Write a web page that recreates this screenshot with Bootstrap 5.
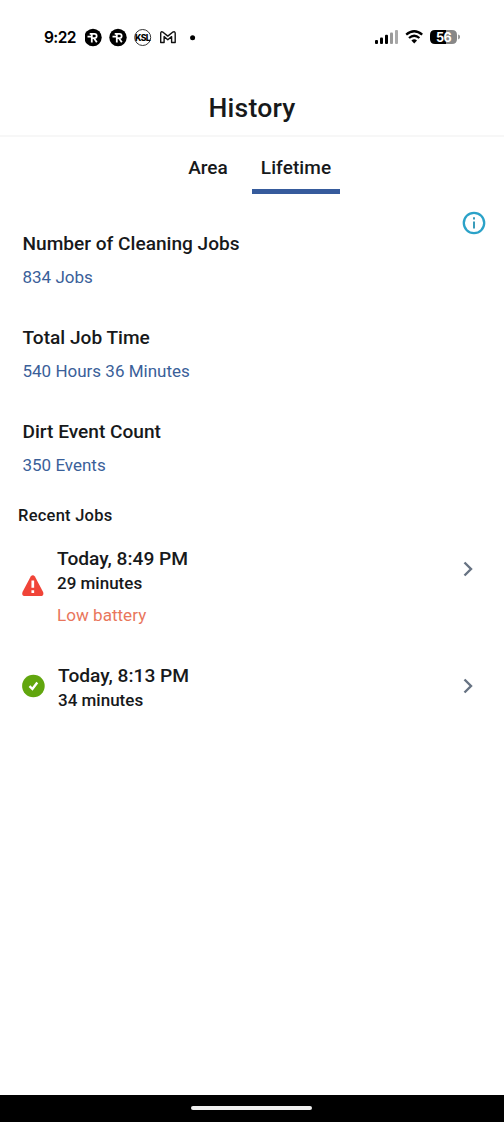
<!DOCTYPE html>
<html lang="en">
<head>
<meta charset="utf-8">
<meta name="viewport" content="width=device-width, initial-scale=1">
<title>History</title>
<link href="https://cdn.jsdelivr.net/npm/bootstrap@5.3.0/dist/css/bootstrap.min.css" rel="stylesheet">
<style>
body{font-family:Roboto,"Liberation Sans",sans-serif;color:#17191b;background:#fff;height:1122px;overflow:hidden}
.status-bar{height:74px;padding:0 42px 0 44px}
.clock{font:600 15.6px/24px Inter,sans-serif;width:41px;padding-top:2px;letter-spacing:-.6px;color:#000;white-space:nowrap}
.page-title{height:63px;border-bottom:2px solid #f7f7f7;font-size:26.6px;font-weight:500;line-height:67px;letter-spacing:.2px;margin:0}
.tabs{height:57px}
.tabs .nav-link{color:#17191b;font-size:19px;font-weight:500;line-height:24px;padding:19px 0 0;height:57px;border-radius:0}
.tab-area{width:88px}
.tab-life{width:88px;letter-spacing:.1px}
.tabs .active{border-bottom:5px solid #365b9c}
.stats{padding:38px 18px 0 22.5px;height:311px}
.stat{height:94px}
.stat-name{font-size:19.1px;line-height:24px;font-weight:500;margin:0 0 9px}
.stat-value{font-size:17px;line-height:24px;color:#3a6099;margin:0}
.info{height:24px;margin-top:-21px}
.recent{font-size:16.5px;line-height:22px;font-weight:500;letter-spacing:.25px;padding-left:18px;margin:0;height:41px}
.job{padding:0 30px 0 22px;background:none;border:0;color:#17191b}
.job-text{padding-left:13px}
.job-time{font-size:19.2px;line-height:24px;padding-top:1px;font-weight:500}
.job-length{font-size:17px;line-height:24px;font-weight:500}
.job-error{font-size:17.1px;line-height:24px;color:#e9765c;margin-top:8px}
.job-first{height:117px}
.job-first .mark-icon{margin-top:28px}
.job-last .mark-icon{margin-top:11px}
.chevron{margin-top:14px}
.home-bar{height:27px;background:#000;padding:0 1px 1px 0}
.home-grip{width:121px;height:4px;border-radius:2px;background:#efefef}
</style>
</head>
<body class="d-flex flex-column">
<div class="status-bar d-flex align-items-center">
  <span class="clock">9:22</span>
  <svg width="115" height="20" viewBox="85 27 115 20" aria-hidden="true">
    <defs><g id="robot"><circle cx="0" cy="0" r="8.7" fill="#000"/><path d="M-3.3-3.6H1.5A2.15 2.15 0 0 1 1.5.7H-1.2M-1.2-3.5V4.9M1 .8L3.8 4.8M-5.5-.9H-1" fill="none" stroke="#fff" stroke-width="1.8"/></g></defs>
    <use href="#robot" x="93" y="37.5"/><use href="#robot" x="118" y="37.5"/>
    <circle cx="142.7" cy="37.5" r="8" fill="#fff" stroke="#333" stroke-width="1"/>
    <text x="142.6" y="40.8" text-anchor="middle" font-family="Inter" font-weight="800" font-size="8.7" letter-spacing="-.6">KSL</text>
    <path d="M160.7 42.5V33.2Q160.8 31 163 32.2L167.8 36.1L172.6 32.2Q175.1 31 175.2 33.2V42.5H171.6V36.6L167.8 39.7L164.1 36.6V42.5Z" fill="none" stroke="#111" stroke-width="1.4" stroke-linejoin="round"/>
    <circle cx="192.6" cy="37.7" r="2.5"/>
  </svg>
  <svg class="ms-auto" width="88" height="20" viewBox="374 27 88 20" aria-hidden="true">
    <g><rect x="375" y="40" width="3" height="4" rx="1"/><rect x="380" y="37.5" width="3" height="6.5" rx="1"/><rect x="385" y="34.7" width="3" height="9.3" rx="1"/><rect x="390" y="32.5" width="3" height="11.5" rx="1" fill="#999"/><rect x="395" y="30" width="3" height="14" rx="1" fill="#aaa"/></g>
    <path d="M406.2 34.7Q414.2 27.8 422.2 34.7M409 38Q414.2 33.5 419.4 38" fill="none" stroke="#000" stroke-width="2.3"/><path d="M411.4 40.4Q414.2 38.2 417 40.4L414.2 43.5Z"/>
    <path d="M435 30H447V44H435Q430 44 430 39V35Q430 30 435 30Z"/><path d="M446 30H452Q457 30 457 35V39Q457 44 452 44H446ZM458.2 34.6Q460 35 460 37T458.2 39.4Z" fill="#888"/>
    <text x="443.6" y="41.7" text-anchor="middle" font-family="Inter" font-weight="700" font-size="12.6" fill="#fff" letter-spacing="-.4">56</text>
  </svg>
</div>
<h1 class="page-title text-center">History</h1>
<nav class="tabs nav justify-content-center">
  <a class="nav-link tab-area text-center" href="#">Area</a>
  <a class="nav-link tab-life text-center active" href="#">Lifetime</a>
</nav>
<section class="stats d-flex">
  <div class="flex-grow-1">
    <div class="stat"><h2 class="stat-name">Number of Cleaning Jobs</h2><p class="stat-value">834 Jobs</p></div>
    <div class="stat"><h2 class="stat-name">Total Job Time</h2><p class="stat-value">540 Hours 36 Minutes</p></div>
    <div class="stat"><h2 class="stat-name">Dirt Event Count</h2><p class="stat-value">350 Events</p></div>
  </div>
  <svg class="info" width="24" height="24" viewBox="0 0 24 24"><circle cx="12" cy="12" r="10.2" fill="none" stroke="#2ba2c8" stroke-width="2.3"/><path d="M12 10.5V17.5M12 6.3V8.5" stroke="#3a9cba" stroke-width="2"/></svg>
</section>
<h2 class="recent">Recent Jobs</h2>
<div class="list-group list-group-flush flex-grow-1">
  <a class="job job-first list-group-item d-flex" href="#">
    <svg class="mark-icon" width="22" height="24" viewBox="0 0 22 24"><path d="M8.7 2.6Q10.8-.2 12.9 2.6L21.1 18Q22.3 22 18.5 22H3.2Q-.7 22 .5 18Z" fill="#f04438"/><path d="M10.8 6.4V13.8M10.8 16.2V18.9" stroke="#fff" stroke-width="2.7"/></svg>
    <div class="job-text flex-grow-1"><div class="job-time">Today, 8:49 PM</div><div class="job-length">29 minutes</div><div class="job-error">Low battery</div></div>
    <svg class="chevron" width="12" height="18" viewBox="0 0 12 18"><path d="M2.5 2.5L9 9L2.5 15.5" fill="none" stroke="#677383" stroke-width="2.4"/></svg>
  </a>
  <a class="job job-last list-group-item d-flex" href="#">
    <svg class="mark-icon" width="23" height="24" viewBox="0 0 23 24"><circle cx="11.4" cy="12" r="11.3" fill="#61a60e"/><path d="M7.5 12.2L10.4 15L15.3 8.6" fill="none" stroke="#fff" stroke-width="2.4"/></svg>
    <div class="job-text flex-grow-1"><div class="job-time">Today, 8:13 PM</div><div class="job-length">34 minutes</div></div>
    <svg class="chevron" width="12" height="18" viewBox="0 0 12 18"><path d="M2.5 2.5L9 9L2.5 15.5" fill="none" stroke="#677383" stroke-width="2.4"/></svg>
  </a>
</div>
<footer class="home-bar d-flex justify-content-center align-items-center"><div class="home-grip"></div></footer>
<script src="https://cdn.jsdelivr.net/npm/bootstrap@5.3.0/dist/js/bootstrap.bundle.min.js"></script>
</body>
</html>
